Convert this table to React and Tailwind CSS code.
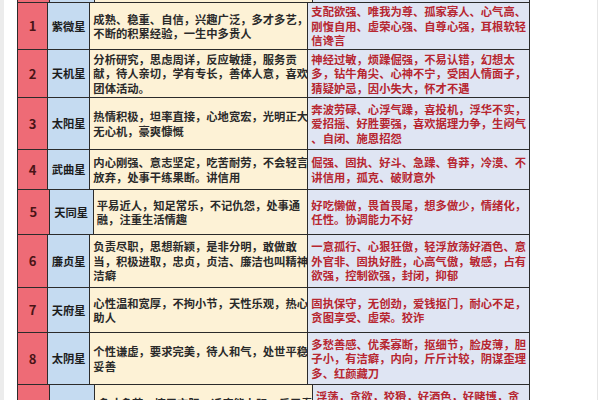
import React from "react";

const rows = [
  {
    no: "1", name: "紫微星", h: "h-[47px]",
    good: ["成熟、稳重、自信，兴趣广泛，多才多艺，", "不断的积累经验，一生中多贵人"],
    bad: ["支配欲强、唯我为尊、孤家寡人、心气高、", "刚愎自用、虚荣心强、自尊心强，耳根软轻", "信谗言"],
  },
  {
    no: "2", name: "天机星", h: "h-[48px]",
    good: ["分析研究，思虑周详，反应敏捷，服务贡", "献，待人亲切，学有专长，善体人意，喜欢", "团体活动。"],
    bad: ["神经过敏，烦躁倔强，不易认错，幻想太", "多，钻牛角尖、心神不宁，受困人情面子，", "猜疑妒忌，因小失大，怀才不遇"],
  },
  {
    no: "3", name: "太阳星", h: "h-[52px]",
    good: ["热情积极，坦率直接，心地宽宏，光明正大", "无心机，豪爽慷慨"],
    bad: ["奔波劳碌、心浮气躁，喜投机，浮华不实，", "爱招摇、好胜要强，喜欢据理力争，生闷气", "、自闭、施恩招怨"],
  },
  {
    no: "4", name: "武曲星", h: "h-[40px]",
    good: ["内心刚强、意志坚定，吃苦耐劳，不会轻言", "放弃，处事干练果断。讲信用"],
    bad: ["倔强、固执、好斗、急躁、鲁莽，冷漠、不", "讲信用，孤克、破财意外"],
  },
  {
    no: "5", name: "天同星", h: "h-[45px]",
    good: ["平易近人，知足常乐，不记仇怨，处事通", "融，注重生活情趣"],
    bad: ["好吃懒做，畏首畏尾，想多做少，情绪化，", "任性。协调能力不好"],
  },
  {
    no: "6", name: "廉贞星", h: "h-[53px]",
    good: ["负责尽职，思想新颖，是非分明，敢做敢", "当，积极进取，忠贞，贞洁、廉洁也叫精神", "洁癖"],
    bad: ["一意孤行、心狠狂傲，轻浮放荡好酒色、意", "外官非、固执好胜，心高气傲，敏感，占有", "欲强，控制欲强，封闭，抑郁"],
  },
  {
    no: "7", name: "天府星", h: "h-[45px]",
    good: ["心性温和宽厚，不拘小节，天性乐观，热心", "助人"],
    bad: ["固执保守，无创劲，爱钱抠门，耐心不足，", "贪图享受、虚荣。狡诈"],
  },
  {
    no: "8", name: "太阴星", h: "h-[52px]",
    good: ["个性谦虚，要求完美，待人和气，处世平稳", "妥善"],
    bad: ["多愁善感、优柔寡断，抠细节，脸皮薄，胆", "子小，有洁癖，内向，斤斤计较，阴谋歪理", "多、红颜藏刀"],
  },
  {
    no: "9", name: "贪狼星", h: "h-[52px]",
    good: ["多才多艺，擅于交际，适应能力强，乐于奉", "献，热情豪爽，精力充沛"],
    bad: ["浮荡，贪欲，狡猾，好酒色，好赌博，贪", "得无厌，不择手段，喜新厌旧", "、投机取巧"],
  },
];

function Lines({ lines, className }) {
  return (
    <div className={`flex flex-col justify-center px-[3px] ${className}`}>
      {lines.map((l, i) => (
        <div key={i} className="whitespace-nowrap leading-[14.5px]">{l}</div>
      ))}
    </div>
  );
}

export default function App() {
  return (
    <div
      className="w-[600px] h-[400px] overflow-hidden bg-white flex"
      style={{ fontFamily: '"Noto Sans CJK SC", "Noto Sans", sans-serif' }}
    >
      <div className="w-[4px] bg-[#ececec]" />
      <div className="w-[13px]" />
      <div className="w-[513px] flex flex-col text-[11.3px] font-semibold">
        {/* header strip, cut off at top */}
        <div className="flex h-[3px] border-l-[1.5px] border-b-[1.5px] border-[#2b2b2b] shrink-0">
          <div className="w-[32px] bg-[#ee6b76] border-r-[1.5px] border-[#2b2b2b]" />
          <div className="w-[45px] bg-[#c5dbf1] border-r-[1.5px] border-[#2b2b2b]" />
          <div className="w-[218px] bg-[#fdf2d6] border-r-[1.5px] border-[#2b2b2b]" />
          <div className="flex-1 bg-[#dfe5f3] border-r-[1.5px] border-[#2b2b2b]" />
        </div>
        {rows.map((r) => (
          <div
            key={r.no}
            className={`flex shrink-0 border-l-[1.5px] border-b-[1.5px] border-[#2b2b2b] ${r.h}`}
          >
            <div className="w-[32px] bg-[#ee6b76] border-r-[1.5px] border-[#2b2b2b] flex items-center justify-center text-[13px] font-bold text-[#4a1416]">
              {r.no}
            </div>
            <div className="w-[45px] bg-[#c5dbf1] border-r-[1.5px] border-[#2b2b2b] flex items-center justify-center font-bold text-[#1c1c1c]">
              {r.name}
            </div>
            <Lines
              lines={r.good}
              className="w-[218px] bg-[#fdf2d6] border-r-[1.5px] border-[#2b2b2b] text-[#2a2a2a]"
            />
            <Lines
              lines={r.bad}
              className="flex-1 bg-[#dfe5f3] border-r-[1.5px] border-[#2b2b2b] text-[#b72630]"
            />
          </div>
        ))}
      </div>
      <div className="flex-1" />
      <div className="w-[1px] bg-[#e6e6e6] mr-[2px]" />
    </div>
  );
}
